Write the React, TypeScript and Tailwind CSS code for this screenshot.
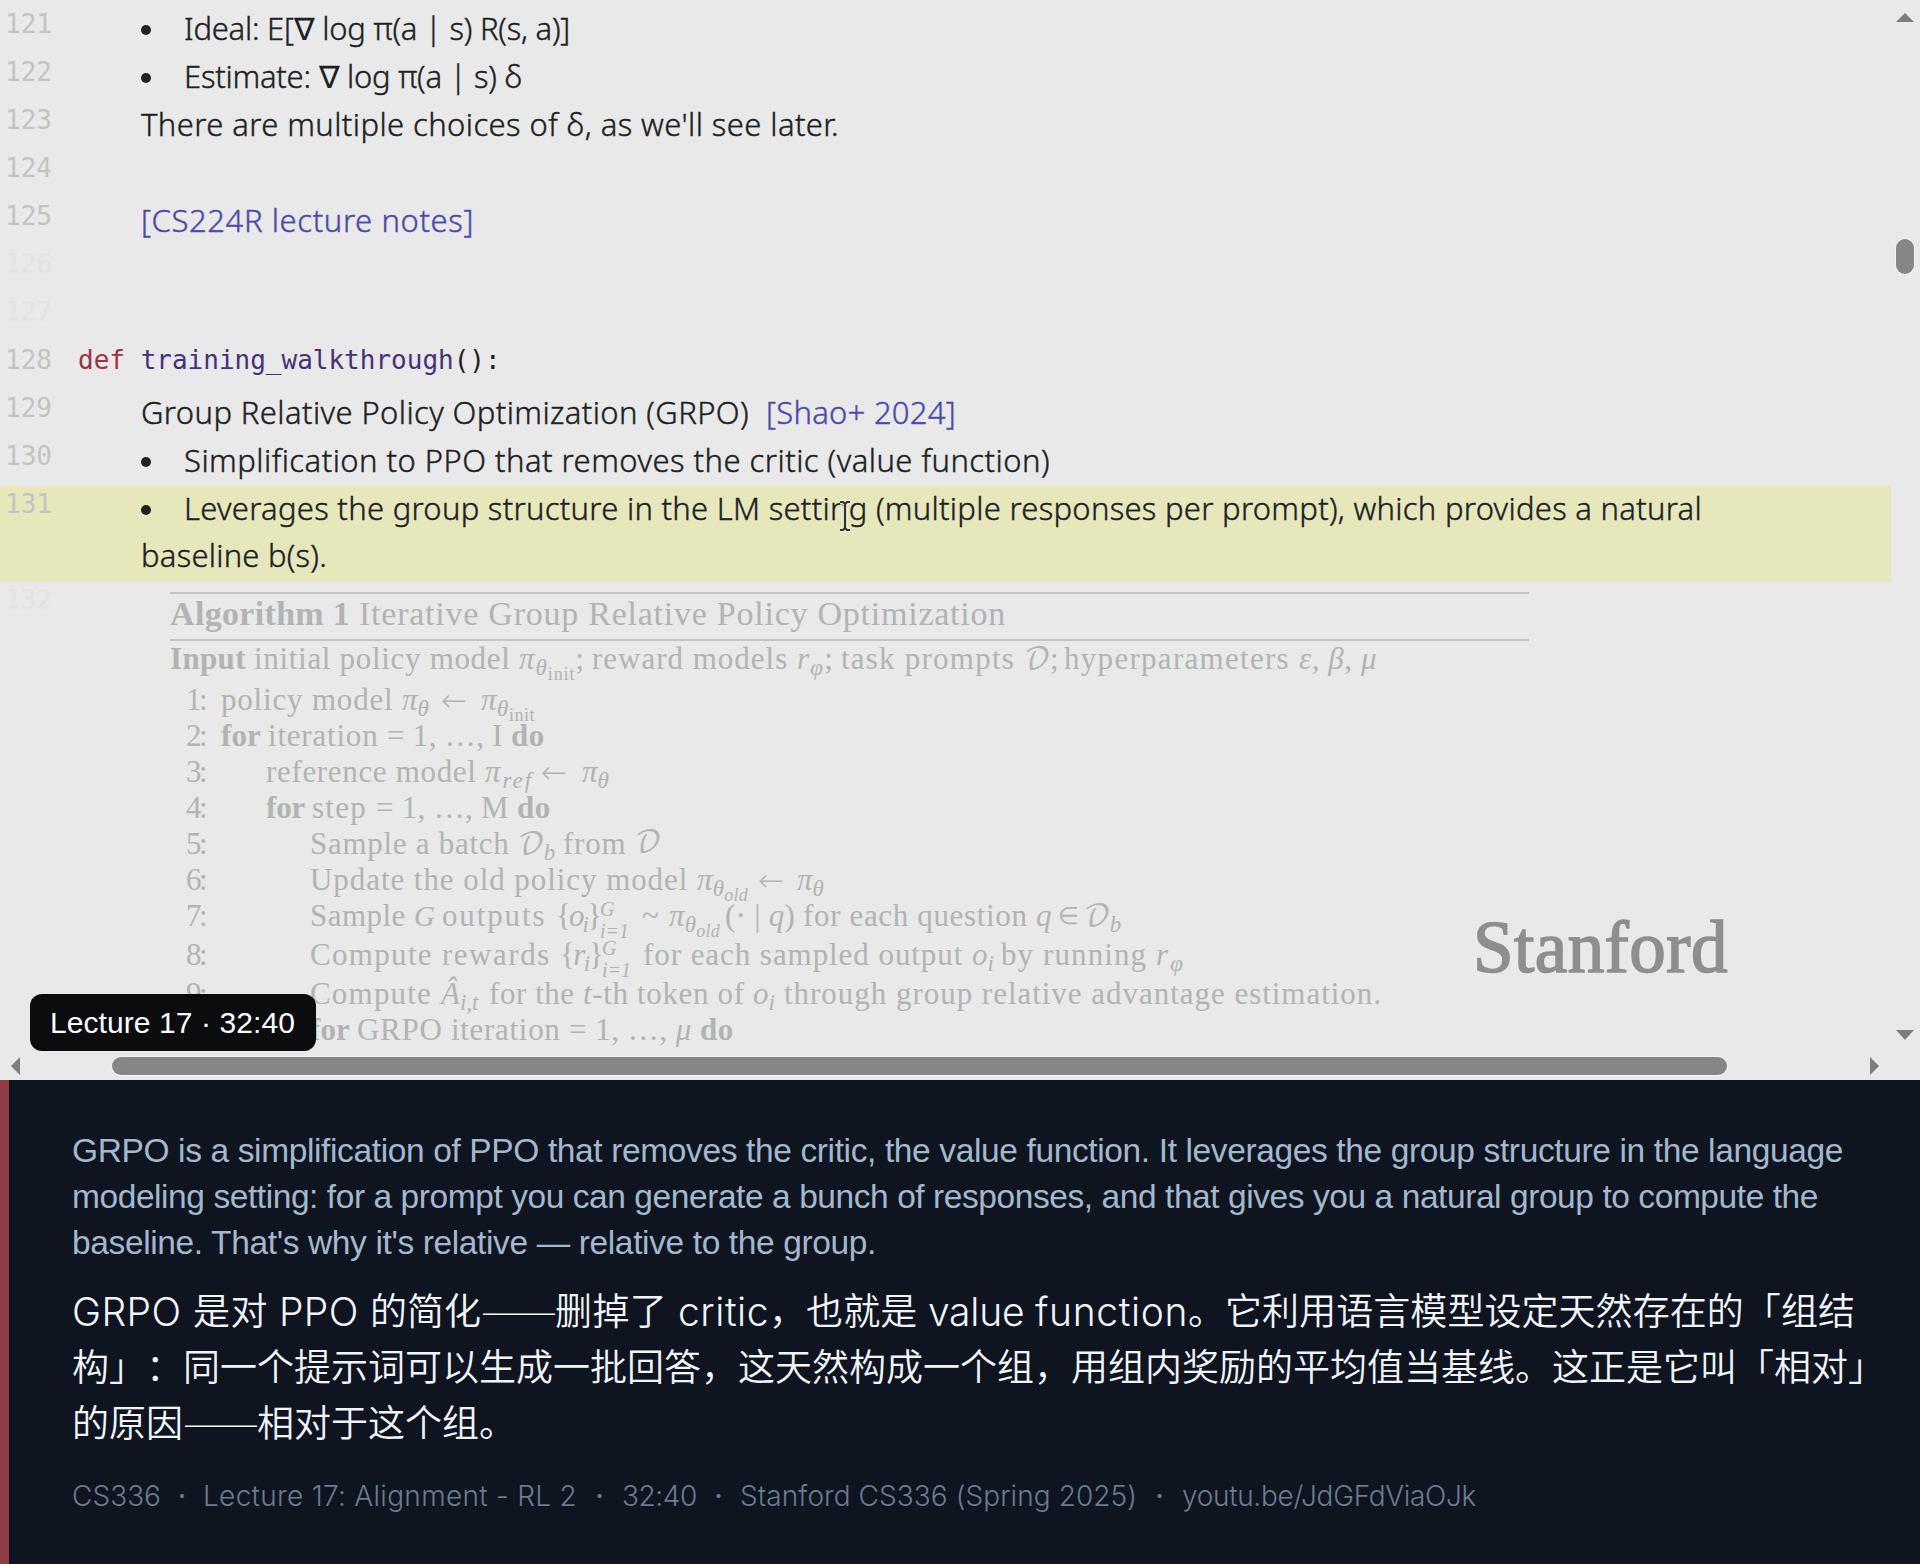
import { useLayoutEffect, useRef, useState } from "react";
import type { ReactNode } from "react";

type Props = { className?: string; children?: ReactNode };

// Spreads its text over the width given by the className
const Fit = ({ className = '', children }: Props) => {
  const box = useRef<HTMLSpanElement>(null);
  const text = useRef<HTMLSpanElement>(null);
  const [spacing, setSpacing] = useState(0);

  useLayoutEffect(() => {
    if (!box.current || !text.current) return;
    const count = Array.from(text.current.textContent || '').length;
    const free = box.current.getBoundingClientRect().width - text.current.getBoundingClientRect().width;
    setSpacing(count > 0 ? free / count : 0);
  }, []);

  return (
    <span ref={box} className={`inline-block shrink-0 whitespace-pre ${className}`}>
      <span ref={text} style={{ letterSpacing: `${spacing}px` }}>{children}</span>
    </span>
  );
};

const Cell = ({ className = '', children }: Props) => (
  <span className={`inline-block shrink-0 whitespace-pre ${className}`}>{children}</span>
);

const Row = ({ no, faint, className = '', children }: Props & { no: number; faint?: boolean }) => (
  <div className={`flex min-h-12 ${className}`}>
    <div className={`w-[78px] shrink-0 pl-[5px] font-['DejaVu_Sans_Mono',monospace] text-[26px] leading-9 ${faint ? 'text-[#e2e3e2]' : 'text-[#c2c4c3]'}`}>
      {no}
    </div>
    {children}
  </div>
);

const Note = ({ className = '', children }: Props) => (
  <div className={`-mt-px ml-[63px] flex h-12 items-start text-[31px] leading-[46px] font-light [-webkit-text-stroke-width:0.4px] ${className || 'text-[#1d2224]'}`}>{children}</div>
);

const Bullet = () => <span className="mt-5 mr-[33px] size-2.5 shrink-0 rounded-full bg-[#1d2224]" />;

const Nabla = () => <span className="font-normal [-webkit-text-stroke-width:0px]">∇</span>;

const Sub = ({ children }: Props) => <span className="relative top-[6px] text-[23px]">{children}</span>;
const SubSub = ({ children }: Props) => <span className="relative top-[11px] text-[18px]">{children}</span>;

const Limits = () => (
  <span className="inline-flex h-9 flex-col align-top text-[20px] leading-[22px] italic">
    <span>G</span>
    <span>i=1</span>
  </span>
);

const ScriptD = () => <span className="font-['DejaVu_Math_TeX_Gyre','DejaVu_Serif','DejaVu_Sans',serif] text-[29px]">𝒟</span>;

const LeftArrow = ({ className = '' }: Props) => (
  <Cell className={`font-['DejaVu_Sans',sans-serif] font-[200] ${className}`}>←</Cell>
);

const Step = ({ no, className = '', children }: Props & { no: number }) => (
  <div className={`flex h-9 items-start leading-9 ${className}`}>
    <Fit className="mr-[16px] ml-4 w-[19px]">{no}:</Fit>
    {children}
  </div>
);

const Algorithm = () => (
  <div className="mt-[10px] ml-[92px] w-[1359px] font-['Liberation_Serif',serif] text-[31px] text-[#b1b4b2]">
    <div className="flex h-[49px] items-start border-y-2 border-[#c3c5c4] text-[34px] leading-[40px]">
      <Fit className="w-[189px] font-bold">Algorithm 1 </Fit>
      <Fit className="w-[647px]">Iterative Group Relative Policy Optimization</Fit>
    </div>
    <div className="flex h-[41px] items-start leading-[35px]">
      <Fit className="w-[84px] font-bold">Input </Fit>
      <Fit className="w-[265px]">initial policy model </Fit>
      <Fit className="mr-[7px] w-[66px]"><i>π<Sub>θ</Sub></i><SubSub>init</SubSub>;</Fit>
      <Fit className="w-[205px]">reward models </Fit>
      <Fit className="mr-[7px] w-[37px]"><i>r<Sub>φ</Sub></i>;</Fit>
      <Fit className="w-[183px]">task prompts </Fit>
      <Fit className="mr-[6px] w-[34px]"><ScriptD />;</Fit>
      <Fit className="w-[235px]">hyperparameters </Fit>
      <Fit className="w-[78px] italic">ε, β, μ</Fit>
    </div>
    <Step no={1}>
      <Fit className="w-[181px]">policy model </Fit>
      <Cell className="w-[39px] italic">π<Sub>θ</Sub></Cell>
      <LeftArrow className="w-[40px]" />
      <Fit className="w-[54px]"><i>π<Sub>θ</Sub></i><SubSub>init</SubSub></Fit>
    </Step>
    <Step no={2}>
      <Fit className="w-[47px] font-bold">for </Fit>
      <Fit className="w-[119px]">iteration </Fit>
      <Fit className="w-[124px]">= 1, …, I </Fit>
      <Fit className="w-[34px] font-bold">do</Fit>
    </Step>
    <Step no={3}>
      <Fit className="ml-[45px] w-[219px]">reference model </Fit>
      <Fit className="mr-[8px] w-[48px] italic">π<Sub>ref</Sub></Fit>
      <LeftArrow className="w-[41px]" />
      <Cell className="italic">π<Sub>θ</Sub></Cell>
    </Step>
    <Step no={4}>
      <Fit className="ml-[45px] w-[46px] font-bold">for </Fit>
      <Fit className="w-[64px]">step </Fit>
      <Fit className="w-[141px]">= 1, …, M </Fit>
      <Fit className="w-[34px] font-bold">do</Fit>
    </Step>
    <Step no={5}>
      <Fit className="ml-[89px] w-[208px]">Sample a batch </Fit>
      <Fit className="mr-[9px] w-[36px]"><ScriptD /><i><Sub>b</Sub></i></Fit>
      <Fit className="w-[72px]">from </Fit>
      <ScriptD />
    </Step>
    <Step no={6}>
      <Fit className="ml-[89px] w-[387px]">Update the old policy model </Fit>
      <Fit className="mr-[10px] w-[51px] italic">π<Sub>θ</Sub><SubSub>old</SubSub></Fit>
      <LeftArrow className="w-[39px]" />
      <Cell className="italic">π<Sub>θ</Sub></Cell>
    </Step>
    <Step no={7} className="h-[39px]">
      <Fit className="ml-[89px] w-[104px]">Sample </Fit>
      <Cell className="w-[28px] text-[29px] italic">G</Cell>
      <Fit className="w-[114px]">outputs </Fit>
      <Fit className="w-[44px]">{'{'}<i>o<Sub>i</Sub></i>{'}'}</Fit>
      <Cell className="w-[42px]"><Limits /></Cell>
      <Cell className="w-[27px]">~</Cell>
      <Fit className="mr-[5px] w-[51px] italic">π<Sub>θ</Sub><SubSub>old</SubSub></Fit>
      <Fit className="w-[78px]">(· | <i>q</i>) </Fit>
      <Fit className="w-[233px]">for each question </Fit>
      <Cell className="w-[22px] italic">q</Cell>
      <Cell className="w-[26px] text-[24px]">∈</Cell>
      <Fit className="w-[36px]"><ScriptD /><i><Sub>b</Sub></i></Fit>
    </Step>
    <Step no={8} className="h-[39px]">
      <Fit className="ml-[89px] w-[132px]">Compute </Fit>
      <Fit className="w-[118px]">rewards </Fit>
      <Fit className="w-[42px]">{'{'}<i>r<Sub>i</Sub></i>{'}'}</Fit>
      <Cell className="w-[41px]"><Limits /></Cell>
      <Fit className="w-[329px]">for each sampled output </Fit>
      <Cell className="w-[29px] italic">o<Sub>i</Sub></Cell>
      <Fit className="w-[155px]">by running </Fit>
      <Fit className="w-[29px] italic">r<Sub>φ</Sub></Fit>
    </Step>
    <Step no={9}>
      <Fit className="ml-[89px] w-[131px]">Compute </Fit>
      <Cell className="w-[48px] italic">Â<Sub>i,t</Sub></Cell>
      <Fit className="w-[94px]">for the </Fit>
      <Fit className="w-[170px]"><i>t</i>-th token of </Fit>
      <Cell className="w-[31px] italic">o<Sub>i</Sub></Cell>
      <Fit className="w-[598px]">through group relative advantage estimation.</Fit>
    </Step>
    <Step no={10}>
      <Fit className="ml-[89px] w-[47px] font-bold">for </Fit>
      <Fit className="w-[212px]">GRPO iteration </Fit>
      <Fit className="w-[131px]">= 1, …, <i>μ</i> </Fit>
      <Fit className="w-[34px] font-bold">do</Fit>
    </Step>
  </div>
);

const Arrow = ({ d, className }: { d: string; className: string }) => (
  <svg viewBox="0 0 18 18" className={`size-[18px] shrink-0 fill-[#7d7d7d] ${className}`}>
    <path d={d} />
  </svg>
);

const Notes = () => (
  <div className="h-[1050px] w-[1892px] shrink-0 overflow-hidden pt-1.5 pr-px font-['Noto_Sans',sans-serif]">
    <Row no={121}>
      <Note><Bullet /><Fit className="w-[386px]">Ideal: E[<Nabla /> log π(a | s) R(s, a)]</Fit></Note>
    </Row>
    <Row no={122}>
      <Note><Bullet /><Fit className="w-[338px]">Estimate: <Nabla /> log π(a | s) δ</Fit></Note>
    </Row>
    <Row no={123}>
      <Note><Fit className="w-[698px]">There are multiple choices of δ, as we'll see later.</Fit></Note>
    </Row>
    <Row no={124} />
    <Row no={125}>
      <Note className="text-[#4a4aae]"><Fit className="w-[333px]">[CS224R lecture notes]</Fit></Note>
    </Row>
    <Row no={126} faint />
    <Row no={127} faint />
    <Row no={128}>
      <div className="font-['DejaVu_Sans_Mono',monospace] text-[26px] leading-9 text-[#1d2224]">
        <span className="text-[#a0323c]">def</span> <span className="text-[#46307c]">training_walkthrough</span>():
      </div>
    </Row>
    <Row no={129}>
      <Note>
        <Fit className="w-[625px]">Group Relative Policy Optimization (GRPO)  </Fit>
        <Fit className="w-[190px] text-[#4a4aae]">[Shao+ 2024]</Fit>
      </Note>
    </Row>
    <Row no={130}>
      <Note><Bullet /><Fit className="w-[866px]">Simplification to PPO that removes the critic (value function)</Fit></Note>
    </Row>
    <Row no={131} className="h-24 bg-[#e6e8bb]">
      <div>
        <Note><Bullet /><Fit className="w-[1518px]">Leverages the group structure in the LM setting (multiple responses per prompt), which provides a natural</Fit></Note>
        <Note><Fit className="w-[186px]">baseline b(s).</Fit></Note>
      </div>
    </Row>
    <Row no={132} faint>
      <Algorithm />
    </Row>
  </div>
);

const Dashes = () => <Fit className="relative -top-[5px] w-[74px] font-['Noto_Sans_CJK_SC',sans-serif] text-[46px] font-thin">——</Fit>;

const Caption = () => (
  <section className="h-[484px] border-l-9 border-[#8f3c42] bg-[#0e1520] pt-12 pl-[63px]">
    <div className="flex flex-col font-['Liberation_Sans',sans-serif] text-[33.5px] leading-[46.2px] text-[#a3b8cc]">
      <Fit className="w-[1771px]">GRPO is a simplification of PPO that removes the critic, the value function. It leverages the group structure in the language</Fit>
      <Fit className="w-[1746px]">modeling setting: for a prompt you can generate a bunch of responses, and that gives you a natural group to compute the</Fit>
      <Fit className="w-[804px]">baseline. That's why it's relative — relative to the group.</Fit>
    </div>
    <div className="mt-[17px] font-['Inter','Noto_Sans_CJK_SC',sans-serif] text-[37px] leading-[56px] font-[350] text-[#f1f5f9] [text-spacing-trim:space-all]" lang="zh-CN">
      <div className="flex h-14">
        <Fit className="w-[121px] text-[39px] font-light">GRPO </Fit>
        <Fit className="w-[86px]">是对 </Fit>
        <Fit className="w-[91px] text-[39px] font-light">PPO </Fit>
        <Fit className="w-[111px]">的简化</Fit>
        <Dashes />
        <Fit className="w-[123px]">删掉了 </Fit>
        <Fit className="w-[91px] text-[39px] font-light">critic</Fit>
        <Fit className="w-[159px]">，也就是 </Fit>
        <Fit className="w-[107px] text-[39px] font-light">value </Fit>
        <Fit className="w-[153px] text-[39px] font-light">function</Fit>
        <Fit className="w-[667px]">。它利用语言模型设定天然存在的「组结</Fit>
      </div>
      <div className="h-14"><Fit className="w-[1813px]">构」：同一个提示词可以生成一批回答，这天然构成一个组，用组内奖励的平均值当基线。这正是它叫「相对」</Fit></div>
      <div className="flex h-14">
        <Fit className="w-[111px]">的原因</Fit>
        <Dashes />
        <Fit className="w-[259px]">相对于这个组。</Fit>
      </div>
    </div>
    <div className="mt-[24px] flex font-['Inter',sans-serif] text-[28px] leading-[40px] font-[350] text-[#6b7b90]">
      <Fit className="w-[89px]">CS336</Fit>
      <Cell className="w-[42px] text-center font-medium">·</Cell>
      <Fit className="w-[374px]">Lecture 17: Alignment - RL 2</Fit>
      <Cell className="w-[45px] text-center font-medium">·</Cell>
      <Fit className="w-[75px]">32:40</Fit>
      <Cell className="w-[43px] text-center font-medium">·</Cell>
      <Fit className="w-[397px]">Stanford CS336 (Spring 2025)</Fit>
      <Cell className="w-[45px] text-center font-medium">·</Cell>
      <Fit className="w-[294px]">youtu.be/JdGFdViaOJk</Fit>
    </div>
  </section>
);

const App = () => {
  return (
    <main className="w-[1920px] overflow-hidden">
      <section className="relative h-[1080px] bg-[#e8e9e8]">
        <div className="flex h-[1050px]">
          <Notes />
          <div className="flex w-7 flex-col items-start pt-[9px] pl-1">
            <Arrow d="M9 4 18 13H0z" className="" />
            <div className="mt-[212px] h-[35px] w-[18px] rounded-full bg-[#868686] ring-1 ring-[#f3f3f3]" />
            <Arrow d="M0 5h18L9 15z" className="mt-auto mb-[7px]" />
          </div>
        </div>
        <div className="flex h-[30px] items-start pt-[7px] pl-[7px]">
          <Arrow d="M4 9 13 0v18z" className="" />
          <div className="ml-[87px] h-[18px] w-[1615px] rounded-full bg-[#868686] ring-1 ring-[#f3f3f3]" />
          <Arrow d="M5 0v18l9-9z" className="ml-[138px]" />
        </div>

        {/* Mouse cursor */}
        <svg viewBox="0 0 12 32" className="absolute top-[500px] left-[839px] h-8 w-3 overflow-visible fill-none">
          <path d="M1 2h3l2 2 2-2h3M6 4v24M1 30h3l2-2 2 2h3" stroke="#efefdc" strokeWidth="5" />
          <path d="M1 2h3l2 2 2-2h3M6 4v24M1 30h3l2-2 2 2h3" stroke="#33352b" strokeWidth="2.2" />
        </svg>

        {/* Watermark */}
        <div className="absolute top-[907px] left-[1473px] font-['Liberation_Serif',serif] text-[73px] leading-[82px] text-[#8d8f8e] [-webkit-text-stroke:1.6px_#8d8f8e]">
          <Fit className="w-[255px]">Stanford</Fit>
        </div>

        {/* Timestamp badge */}
        <div className="absolute top-[994px] left-[30px] h-[57px] w-[286px] rounded-xl bg-[#0b0c0e] pl-5 font-['Liberation_Sans',sans-serif] text-[30px] leading-[57px] text-white">
          <Fit className="w-[245px]">Lecture 17 · 32:40</Fit>
        </div>
      </section>
      <Caption />
    </main>
  );
};

export default App;
